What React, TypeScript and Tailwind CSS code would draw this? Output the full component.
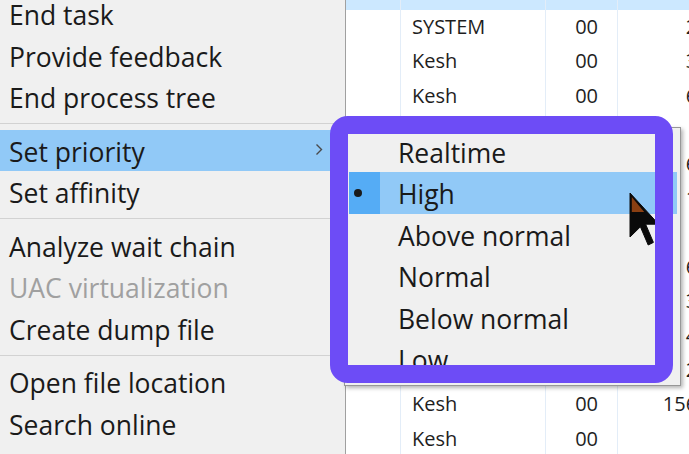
import React from 'react';

type MenuEntry = { label: string; disabled?: boolean; active?: boolean; submenu?: boolean } | 'sep';

const menuEntries: MenuEntry[] = [
  { label: 'End task' },
  { label: 'Provide feedback' },
  { label: 'End process tree' },
  'sep',
  { label: 'Set priority', active: true, submenu: true },
  { label: 'Set affinity' },
  'sep',
  { label: 'Analyze wait chain' },
  { label: 'UAC virtualization', disabled: true },
  { label: 'Create dump file' },
  'sep',
  { label: 'Open file location' },
  { label: 'Search online' },
];

const priorities = [
  { label: 'Realtime' },
  { label: 'High', checked: true },
  { label: 'Above normal' },
  { label: 'Normal' },
  { label: 'Below normal' },
  { label: 'Low' },
];

// rows of the process list behind the menus
const rows = [
  { user: 'SYSTEM', cpu: '00', mem: '2,120 K', selected: true },
  { user: 'SYSTEM', cpu: '00', mem: '2,316 K' },
  { user: 'Kesh', cpu: '00', mem: '3,492 K' },
  { user: 'Kesh', cpu: '00', mem: '6,044 K' },
  { user: 'Kesh', cpu: '00', mem: '912 K' },
  { user: 'Kesh', cpu: '00', mem: '6,780 K' },
  { user: 'SYSTEM', cpu: '00', mem: '1,536 K' },
  { user: 'Kesh', cpu: '00', mem: '844 K' },
  { user: 'Kesh', cpu: '00', mem: '6,212 K' },
  { user: 'Kesh', cpu: '00', mem: '3,148 K' },
  { user: 'Kesh', cpu: '00', mem: '4,972 K' },
  { user: 'Kesh', cpu: '00', mem: '2,660 K' },
  { user: 'Kesh', cpu: '00', mem: '156,388 K' },
  { user: 'Kesh', cpu: '00', mem: '736 K' },
];

const ContextMenu: React.FC = () => (
  <div className="w-[346px] h-full shrink-0 overflow-hidden bg-[#f0f0f0] border-r border-[#a0a0a0] shadow-[1px_0_0_#d6d6d6]">
    <div className="-mt-[7px]">
      {menuEntries.map((entry, i) =>
        entry === 'sep' ? (
          <div key={i} className="h-[12px] flex items-center">
            <div className="w-full h-px bg-[#d2d2d2]" />
          </div>
        ) : (
          <div
            key={i}
            className={`h-[41.5px] flex items-center pl-[9px] pt-[5px] text-[26.5px] ${
              entry.active ? 'bg-[#91c9f7]' : ''
            } ${entry.disabled ? 'text-[#a0a0a0]' : 'text-[#1a1a1a]'}`}
          >
            <span>{entry.label}</span>
            {entry.submenu && (
              <svg className="ml-auto mr-[22px] -mt-[6px]" width="8" height="13" viewBox="0 0 8 13">
                <path d="M1.5 1.5 L6.5 6.5 L1.5 11.5" fill="none" stroke="#4a4a4a" strokeWidth="1.4" />
              </svg>
            )}
          </div>
        )
      )}
    </div>
  </div>
);

const ProcessTable: React.FC = () => (
  <div className="flex-1 h-full overflow-hidden bg-white text-[20px] text-[#1e1e1e]">
    <div className="-mt-[24.5px]">
      {rows.map((row, i) => (
        <div
          key={i}
          className={`h-[34.3px] grid grid-cols-[54px_145px_72px_150px] ${row.selected ? 'bg-[#cce8ff]' : ''}`}
        >
          <div />
          <div className="border-l border-[#e3edf8] flex items-center pl-[11px]">{row.user}</div>
          <div className="border-l border-[#e3edf8] flex items-center justify-end pr-[19px]">{row.cpu}</div>
          <div className="border-l border-[#e3edf8] flex items-center justify-end pr-[13px] whitespace-nowrap">
            {row.mem}
          </div>
        </div>
      ))}
    </div>
  </div>
);

const PrioritySubmenu: React.FC = () => (
  <div className="absolute left-[344px] top-[127px] w-[337px] h-[259px] bg-[#f0f0f0] border border-[#979797] shadow-[2px_2px_4px_rgba(0,0,0,0.3)] pt-[2.5px] pl-[4px] pr-[3px] overflow-hidden text-[26.5px] text-[#1a1a1a]">
    {priorities.map((p) => (
      <div key={p.label} className={`h-[41.5px] flex items-center ${p.checked ? 'bg-[#91c9f7]' : ''}`}>
        <div className={`w-[31px] h-full flex items-center pl-[5px] ${p.checked ? 'bg-[#55acf5]' : ''}`}>
          {p.checked && <div className="w-[8px] h-[8px] rounded-full bg-[#1a1a1a]" />}
        </div>
        <span className="pl-[18px] pt-[5px]">{p.label}</span>
      </div>
    ))}
  </div>
);

const Cursor: React.FC = () => (
  <svg className="absolute left-[628px] top-[191px]" width="34" height="58" viewBox="0 0 34 58">
    <polygon
      points="2,2 2,46 12.4,35.8 20.2,54 25.4,51.4 17.6,33.2 30.6,33.2"
      fill="#0a0a0a"
      stroke="#0a0a0a"
      strokeWidth="1"
      strokeLinejoin="round"
    />
    <polygon points="3.8,6 3.8,21 16.2,21" fill="#8a3f12" />
  </svg>
);

export default function App() {
  return (
    <div className="relative w-[689px] h-[454px] overflow-hidden bg-white flex font-['Open_Sans','Noto_Sans',sans-serif]">
      <ContextMenu />
      <ProcessTable />
      <PrioritySubmenu />
      <Cursor />
      {/* purple highlight drawn around the priority submenu */}
      <div className="absolute left-[330px] top-[116px] w-[343px] h-[267px] border-[18px] border-[#6d4cf6] rounded-[18px]" />
    </div>
  );
}
